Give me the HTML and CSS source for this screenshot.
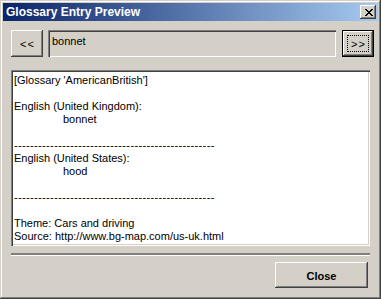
FILE: index.html
```html
<!DOCTYPE html>
<html>
<head>
<meta charset="utf-8">
<link rel="stylesheet" href="styles.css">
</head>
<body>
<div class="window">
  <div class="titlebar">
    <span class="title">Glossary Entry Preview</span>
    <div class="tb-close">
      <svg width="8" height="7" viewBox="0 0 8 7" shape-rendering="crispEdges">
        <path fill="#000" d="M0 0h2v1H0zM6 0h2v1H6zM1 1h2v1H1zM5 1h2v1H5zM2 2h4v1H2zM3 3h2v1H3zM2 4h4v1H2zM1 5h2v1H1zM5 5h2v1H5zM0 6h2v1H0zM6 6h2v1H6z"/>
      </svg>
    </div>
  </div>
  <div class="client">
    <div class="toprow">
      <div class="btn nav"><span class="lbl">&lt;&lt;</span></div>
      <div class="field">bonnet</div>
      <div class="btn nav default"><span class="focus">&gt;&gt;</span></div>
    </div>
    <div class="memo">
      <div class="line">[Glossary 'AmericanBritish']</div>
      <div class="line"></div>
      <div class="line">English (United Kingdom):</div>
      <div class="line indent">bonnet</div>
      <div class="line"></div>
      <div class="line dashes">--------------------------------------------------</div>
      <div class="line">English (United States):</div>
      <div class="line indent">hood</div>
      <div class="line"></div>
      <div class="line dashes">--------------------------------------------------</div>
      <div class="line"></div>
      <div class="line">Theme: Cars and driving</div>
      <div class="line">Source: http://www.bg-map.com/us-uk.html</div>
    </div>
    <div class="sep"></div>
    <div class="bottomrow">
      <div class="btn closebtn">Close</div>
    </div>
  </div>
</div>
</body>
</html>
```
FILE: styles.css
```css
html, body {
  margin: 0;
  padding: 0;
  background: #d4d0c8;
}
body {
  font-family: "Liberation Sans", Arial, sans-serif;
  font-size: 11px;
  color: #000;
}
.window {
  width: 381px;
  height: 299px;
  box-sizing: border-box;
  padding: 3px;
  background: #d4d0c8;
  box-shadow: inset -1px -1px #404040, inset 1px 1px #d4d0c8, inset -2px -2px #808080, inset 2px 2px #ffffff;
  display: flex;
  flex-direction: column;
}
.titlebar {
  height: 18px;
  background: linear-gradient(to right, #0a246a, #a6caf0);
  display: flex;
  align-items: center;
  justify-content: space-between;
  padding: 0 2px 0 3px;
}
.title {
  color: #fff;
  font-weight: bold;
  font-size: 12px;
}
.tb-close {
  width: 16px;
  height: 14px;
  box-sizing: border-box;
  background: #d4d0c8;
  box-shadow: inset -1px -1px #404040, inset 1px 1px #ffffff, inset -2px -2px #808080;
  display: flex;
  align-items: center;
  justify-content: center;
  padding-left: 1px;
}
.tb-close svg { display: block; }
.client {
  flex: 1;
  padding: 9px 0 0 8px;
  display: flex;
  flex-direction: column;
}
.toprow {
  display: flex;
  height: 27px;
}
.btn {
  box-sizing: border-box;
  background: #d4d0c8;
  box-shadow: inset -1px -1px #404040, inset 1px 1px #ffffff, inset -2px -2px #808080;
  display: flex;
  align-items: center;
  justify-content: center;
}
.nav {
  width: 32px;
  height: 27px;
  font-size: 11px;
}
.nav .lbl {
  letter-spacing: 1px;
  padding-left: 1px;
}
.field {
  width: 288px;
  height: 27px;
  margin-left: 5px;
  box-sizing: border-box;
  background: #d4d0c8;
  box-shadow: inset 1px 1px #808080, inset 2px 2px #404040, inset -1px -1px #ffffff, inset -2px -2px #d4d0c8;
  padding: 5px 0 0 4px;
  line-height: 13px;
}
.default {
  margin-left: 6px;
  border: 1px solid #000;
  box-shadow: inset -1px -1px #404040, inset 1px 1px #ffffff, inset -2px -2px #808080;
}
.focus {
  width: 22px;
  height: 17px;
  box-sizing: border-box;
  border: 1px dotted #000;
  display: flex;
  align-items: center;
  justify-content: center;
  letter-spacing: 1px;
  padding-left: 1px;
}
.memo {
  margin-top: 13px;
  width: 359px;
  height: 176px;
  box-sizing: border-box;
  background: #fff;
  box-shadow: inset 1px 1px #808080, inset 2px 2px #404040, inset -1px -1px #ffffff, inset -2px -2px #d4d0c8;
  padding: 4px 0 0 3px;
}
.line {
  height: 13px;
  line-height: 13px;
  white-space: pre;
}
.indent {
  padding-left: 49px;
}
.dashes {
  letter-spacing: 0.35px;
}
.sep {
  margin-top: 7px;
  width: 359px;
  height: 0;
  border-top: 2px solid #808080;
  border-bottom: 1px solid #ffffff;
}
.bottomrow {
  display: flex;
  justify-content: flex-end;
  padding-right: 10px;
  margin-top: 6px;
}
.closebtn {
  width: 93px;
  height: 26px;
  font-weight: bold;
  padding-top: 1px;
}
```
